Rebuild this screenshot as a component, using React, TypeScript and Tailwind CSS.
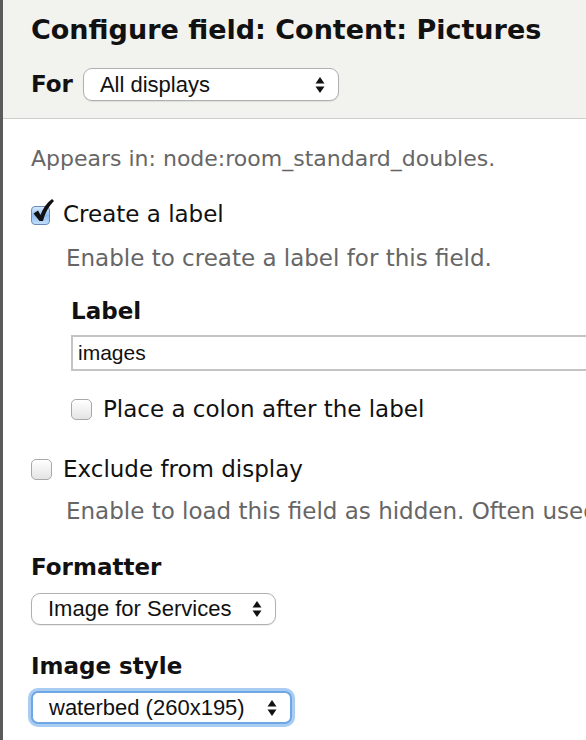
import React from 'react'

const body = { fontFamily: '"DejaVu Sans", "Noto Sans", sans-serif' }
const ui = { fontFamily: '"Liberation Sans", Arial, sans-serif' }

function Arrows() {
  return (
    <svg width="10" height="18" viewBox="0 0 10 18" aria-hidden>
      <path d="M5 1 L9.5 7.5 L0.5 7.5 Z" fill="#111" />
      <path d="M5 17 L9.5 10.5 L0.5 10.5 Z" fill="#111" />
    </svg>
  )
}

function FakeSelect({ value, width, height, focused }: { value: string; width: string; height: string; focused?: boolean }) {
  return (
    <div
      className={`${width} ${height} flex items-center justify-between pl-[16px] pr-[13px] bg-white text-[22px] text-[#111] ${
        focused
          ? 'rounded-[7px] border-[2px] border-[#6fa6e4] shadow-[0_0_0_3px_#a9cdf2]'
          : 'rounded-[9px] border border-[#b0b0b0] shadow-[0_1px_1px_rgba(0,0,0,0.08)]'
      }`}
      style={ui}
    >
      <span className="leading-none">{value}</span>
      <Arrows />
    </div>
  )
}

function CheckBox({ checked }: { checked?: boolean }) {
  if (checked) {
    return (
      <span className="relative inline-block w-[21px] h-[21px] shrink-0">
        <span className="absolute left-0 top-[2px] w-[19px] h-[19px] rounded-[4px] border border-[#6b8bb4] bg-gradient-to-b from-[#d7e9fc] via-[#8fbdf0] to-[#c1ddfb]" />
        <svg className="absolute left-[0px] top-[-6px]" width="24" height="26" viewBox="0 0 24 26" aria-hidden>
          <path d="M2.5 15.5 L7 12.5 L9.5 17 C12 10.5 15.5 5 21 1 L23 3 C18 8 14.5 14 12 23 L8.5 23 Z" fill="#111" />
        </svg>
      </span>
    )
  }
  return (
    <span className="inline-block w-[21px] h-[21px] shrink-0 rounded-[5px] border border-[#a8a8a8] bg-gradient-to-b from-[#ffffff] to-[#e4e4e4] shadow-[inset_0_1px_1px_rgba(255,255,255,0.9)]" />
  )
}

export default function App() {
  return (
    <div className="w-[586px] h-[740px] overflow-hidden bg-white border-l-[3px] border-[#5a5a5a]" style={body}>
      <div className="w-[760px]">
        <div className="bg-[#f2f2ee] border-b border-[#cfcfcb] pl-[28px] pt-[13px] h-[119px]">
          <h1 className="text-[27px] font-bold leading-[34px] text-[#111]">
            Configure field: Content: Pictures
          </h1>
          <div className="flex items-center gap-[10px] mt-[21px]">
            <span className="text-[23px] font-bold text-[#111] leading-none">For</span>
            <FakeSelect value="All displays" width="w-[256px]" height="h-[33px]" />
          </div>
        </div>

        <div className="pl-[28px] pt-[27px]">
          <p className="text-[22px] leading-[26px] text-[#666]">Appears in: node:room_standard_doubles.</p>

          <label className="flex items-center gap-[11px] mt-[28px]">
            <CheckBox checked />
            <span className="text-[23px] leading-[28px] text-[#111]">Create a label</span>
          </label>
          <p className="ml-[35px] mt-[16px] text-[23px] leading-[28px] text-[#666]">
            Enable to create a label for this field.
          </p>

          <div className="ml-[40px] mt-[25px]">
            <div className="text-[23px] font-bold leading-[28px] text-[#111]">Label</div>
            <div className="mt-[10px] h-[36px] w-[600px] border-[2px] border-[#c4c4c4] bg-white flex items-center pl-[5px] text-[21px] text-[#111]" style={ui}>
              images
            </div>
            <label className="flex items-center gap-[11px] mt-[24px]">
              <CheckBox />
              <span className="text-[23px] leading-[28px] text-[#111]">Place a colon after the label</span>
            </label>
          </div>

          <label className="flex items-center gap-[11px] mt-[32px]">
            <CheckBox />
            <span className="text-[23px] leading-[28px] text-[#111]">Exclude from display</span>
          </label>
          <p className="ml-[35px] mt-[14px] text-[23px] leading-[28px] text-[#666] whitespace-nowrap">
            Enable to load this field as hidden. Often used to group fields.
          </p>

          <div className="mt-[28px] text-[23px] font-bold leading-[28px] text-[#111]">Formatter</div>
          <div className="mt-[12px]">
            <FakeSelect value="Image for Services" width="w-[245px]" height="h-[32px]" />
          </div>

          <div className="mt-[27px] text-[23px] font-bold leading-[28px] text-[#111]">Image style</div>
          <div className="mt-[11px]">
            <FakeSelect value="waterbed (260x195)" width="w-[261px]" height="h-[33px]" focused />
          </div>
        </div>
      </div>
    </div>
  )
}
